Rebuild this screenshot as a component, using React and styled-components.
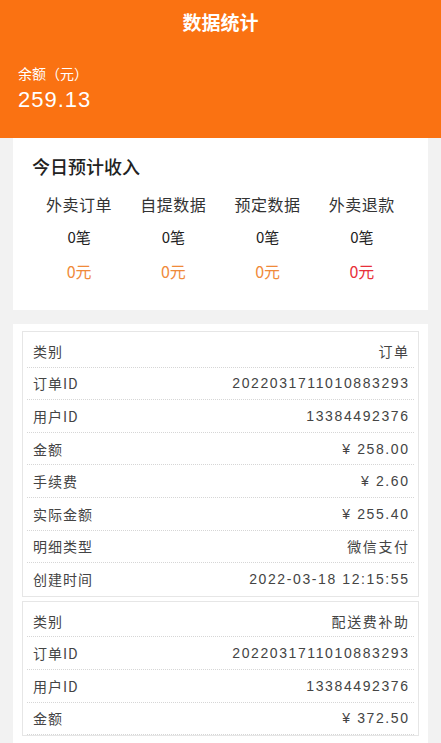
import React from 'react';
import styled, { createGlobalStyle } from 'styled-components';

const GlobalStyle = createGlobalStyle`
  html, body {
    margin: 0;
    padding: 0;
    background: #f2f2f2;
    font-family: "Liberation Sans", "Noto Sans CJK SC", sans-serif;
  }
  * { box-sizing: border-box; }
`;

const Page = styled.div`
  width: 441px;
  height: 743px;
  background: #f2f2f2;
  overflow: hidden;
`;

const Header = styled.header`
  background: #fa7212;
  height: 138px;
  color: #ffffff;
  display: flex;
  flex-direction: column;
  padding: 0 18px;
`;

const Title = styled.h1`
  margin: 0;
  height: 44px;
  line-height: 44px;
  text-align: center;
  font-size: 19px;
  font-weight: 700;
  font-family: "Noto Sans CJK SC", sans-serif;
`;

const BalanceLabel = styled.div`
  margin-top: 20px;
  font-size: 14px;
  line-height: 18px;
  font-family: "Noto Sans CJK SC", sans-serif;
`;

const BalanceValue = styled.div`
  margin-top: 4px;
  font-size: 22px;
  line-height: 28px;
  letter-spacing: 1px;
`;

const Card = styled.section`
  background: #ffffff;
  margin: ${p => p.$top || 0}px 13px 0;
  padding: ${p => p.$padding};
`;

const CardTitle = styled.h2`
  margin: 0;
  font-size: 18px;
  line-height: 24px;
  font-weight: 500;
  color: #222;
  font-family: "Noto Sans CJK SC", sans-serif;
`;

const StatGrid = styled.div`
  display: grid;
  grid-template-columns: repeat(4, 1fr);
  margin-top: 15px;
`;

const StatCol = styled.div`
  display: flex;
  flex-direction: column;
  align-items: center;
  font-family: "Noto Sans CJK SC", sans-serif;
`;

const StatLabel = styled.div`
  font-size: 16px;
  line-height: 22px;
  letter-spacing: 0.5px;
  color: #333;
`;

const StatCount = styled.div`
  margin-top: 12px;
  font-size: 15px;
  line-height: 20px;
  color: #222;
`;

const StatMoney = styled.div`
  margin-top: 14px;
  font-size: 16px;
  line-height: 20px;
  color: ${p => (p.$red ? '#e8303a' : '#f08a3a')};
`;

const Record = styled.div`
  border: 1px solid #e6e6e6;
  padding-top: 3px;
  & + & {
    margin-top: 4px;
  }
`;

const Row = styled.div`
  height: 32.6px;
  margin: 0 4px;
  padding: 0 6px;
  display: flex;
  align-items: center;
  justify-content: space-between;
  color: #444;
  border-bottom: 1px dotted #d6d6d6;
  ${Record}:not([data-open]) &:last-child {
    border-bottom: none;
  }
`;

const RowLabel = styled.span`
  font-family: "Noto Sans CJK SC", sans-serif;
  font-size: 14px;
  letter-spacing: 1px;
`;

const RowValue = styled.span`
  font-family: "Liberation Sans", "Noto Sans CJK SC", sans-serif;
  font-size: 14px;
  letter-spacing: 1.6px;
  margin-right: -1.6px;
`;

const stats = [
  { label: '外卖订单', count: '0笔', money: '0元' },
  { label: '自提数据', count: '0笔', money: '0元' },
  { label: '预定数据', count: '0笔', money: '0元' },
  { label: '外卖退款', count: '0笔', money: '0元', red: true },
];

// the second record continues below the fold
const records = [
  {
    open: false,
    rows: [
      ['类别', '订单'],
      ['订单ID', '2022031711010883293'],
      ['用户ID', '13384492376'],
      ['金额', '¥ 258.00'],
      ['手续费', '¥ 2.60'],
      ['实际金额', '¥ 255.40'],
      ['明细类型', '微信支付'],
      ['创建时间', '2022-03-18 12:15:55'],
    ],
  },
  {
    open: true,
    rows: [
      ['类别', '配送费补助'],
      ['订单ID', '2022031711010883293'],
      ['用户ID', '13384492376'],
      ['金额', '¥ 372.50'],
    ],
  },
];

const App = () => (
  <Page>
    <GlobalStyle />
    <Header>
      <Title>数据统计</Title>
      <BalanceLabel>余额（元）</BalanceLabel>
      <BalanceValue>259.13</BalanceValue>
    </Header>

    <Card $padding="16px 19px 29px">
      <CardTitle>今日预计收入</CardTitle>
      <StatGrid>
        {stats.map(s => (
          <StatCol key={s.label}>
            <StatLabel>{s.label}</StatLabel>
            <StatCount>{s.count}</StatCount>
            <StatMoney $red={s.red}>{s.money}</StatMoney>
          </StatCol>
        ))}
      </StatGrid>
    </Card>

    <Card $top={14} $padding="7px 9px 10px">
      {records.map((rec, i) => (
        <Record key={i} data-open={rec.open ? '' : undefined}>
          {rec.rows.map(([k, v]) => (
            <Row key={k}>
              <RowLabel>{k}</RowLabel>
              <RowValue>{v}</RowValue>
            </Row>
          ))}
        </Record>
      ))}
    </Card>
  </Page>
);

export default App;
